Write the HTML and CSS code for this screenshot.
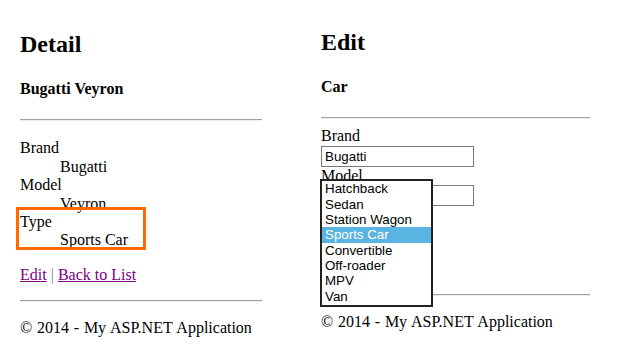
FILE: index.html
```html
<!DOCTYPE html>
<html lang="en">
<head>
    <meta charset="UTF-8">
    <title>Detail / Edit</title>
    <link rel="stylesheet" href="styles.css">
</head>
<body>
    <div class="screens">
        <div class="panel panel-detail">
            <h2>Detail</h2>
            <h4>Bugatti Veyron</h4>
            <hr>
            <dl>
                <dt>Brand</dt>
                <dd>Bugatti</dd>
                <dt>Model</dt>
                <dd>Veyron</dd>
                <div class="highlight">
                    <dt>Type</dt>
                    <dd>Sports Car</dd>
                </div>
            </dl>
            <p class="links">
                <a href="#">Edit</a> <span class="sep">|</span> <a href="#">Back to List</a>
            </p>
            <hr>
            <footer>
                <p>&copy; 2014 - My ASP.NET Application</p>
            </footer>
        </div>

        <div class="panel panel-edit">
            <h2>Edit</h2>
            <h4>Car</h4>
            <hr>
            <form class="car-form">
                <div class="field">
                    <label>Brand</label>
                    <input type="text" value="Bugatti">
                </div>
                <div class="field">
                    <label>Model</label>
                    <input type="text" value="">
                </div>
                <div class="field type-field">
                    <label>Type</label>
                    <select class="type-select"><option>Sports Car</option></select>
                </div>
                <!-- open dropdown of the Type select -->
                <ul class="listbox">
                    <li>Hatchback</li>
                    <li>Sedan</li>
                    <li>Station Wagon</li>
                    <li class="selected">Sports Car</li>
                    <li>Convertible</li>
                    <li>Off-roader</li>
                    <li>MPV</li>
                    <li>Van</li>
                </ul>
            </form>
            <hr>
            <footer>
                <p>&copy; 2014 - My ASP.NET Application</p>
            </footer>
        </div>
    </div>
</body>
</html>
```

FILE: styles.css
```css
body {
    margin: 0;
    background: #fff;
    color: #000;
    font-family: "Liberation Serif", "Times New Roman", serif;
    font-size: 16px;
    line-height: 18.4px;
}
.screens {
    display: flex;
    align-items: flex-start;
    padding-left: 20px;
}
.panel {
    display: flow-root;
}
.panel-detail {
    width: 242px;
    margin-right: 59px;
    padding-top: 11px;
}
.panel-edit {
    width: 269px;
    padding-top: 9px;
}
h2 {
    font-size: 24px;
    line-height: 27.6px;
    margin: 19.92px 0;
}
h4 {
    font-size: 16px;
    margin: 21.28px 0;
}
hr {
    border: none;
    border-top: 1px solid #a0a0a0;
    border-bottom: 1px solid #eee;
    margin: 8px 0;
}
dl {
    margin: 18px 0 16px;
}
dd {
    margin-left: 40px;
}
.highlight {
    position: relative;
}
.highlight::after {
    content: "";
    position: absolute;
    top: -6px;
    left: -4px;
    width: 124px;
    bottom: 0;
    border: 3px solid #ff6a00;
}
.links {
    margin: 14px 0 16px;
}
a {
    color: #800080;
}
.sep {
    color: #888;
}
footer p {
    margin: 17px 0 16px;
    word-spacing: 0.8px;
}

/* edit form */
.car-form {
    position: relative;
}
.field label {
    display: block;
}
.field input {
    display: block;
    box-sizing: border-box;
    width: 153px;
    height: 21px;
    margin: 0;
    padding: 0 3px;
    border: 1px solid #7a7a7a;
    font-family: "Liberation Sans", Arial, sans-serif;
    font-size: 13.33px;
}
.type-field {
    height: 80px;
}
.type-select {
    display: block;
    width: 110px;
}
.listbox {
    position: absolute;
    top: 52px;
    left: -1px;
    width: 113px;
    box-sizing: border-box;
    margin: 0;
    padding: 0 0 1px;
    list-style: none;
    background: #fff;
    border: 2px solid #222;
    font-family: "Liberation Sans", Arial, sans-serif;
    font-size: 13.33px;
    line-height: 15.33px;
}
.listbox li {
    padding-left: 3px;
    white-space: nowrap;
}
.listbox .selected {
    background: #5ab4e1;
    color: #fff;
}
```
